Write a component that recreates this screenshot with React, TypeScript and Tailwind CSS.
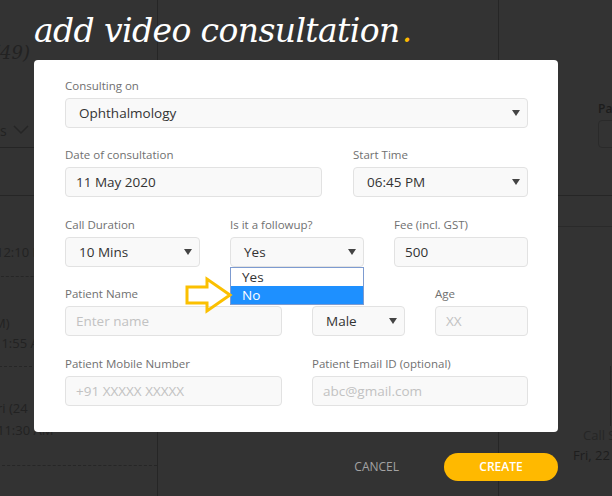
import type { ReactNode } from "react";

const sans = "font-['Open_Sans',_'Noto_Sans',_sans-serif]";

function Caret() {
  return (
    <svg width="8" height="6" viewBox="0 0 8 6" className="shrink-0">
      <path d="M0 0 H8 L4 6 Z" fill="#444" />
    </svg>
  );
}

function Label({ children }: { children: ReactNode }) {
  return (
    <div className="h-4 text-[11.5px] leading-4 text-[#707070] whitespace-nowrap">
      {children}
    </div>
  );
}

function Input({ value, placeholder }: { value?: string; placeholder?: string }) {
  return (
    <div className="mt-1 flex h-[30px] items-center rounded-[4px] border border-[#e2e2e2] bg-[#f9f9f9] px-[10px] text-[13.5px]">
      {value ? (
        <span className="text-[#333]">{value}</span>
      ) : (
        <span className="text-[#c2c2c2]">{placeholder}</span>
      )}
    </div>
  );
}

function Select({ value, children }: { value: string; children?: ReactNode }) {
  return (
    <div className="relative mt-1">
      <div className="flex h-[30px] items-center justify-between rounded-[4px] border border-[#e2e2e2] bg-[#f9f9f9] pl-[13px] pr-[7px] text-[13.5px] text-[#333]">
        <span>{value}</span>
        <Caret />
      </div>
      {children}
    </div>
  );
}

function Field({ label, children }: { label: ReactNode; children: ReactNode }) {
  return (
    <div className="flex flex-col">
      <Label>{label}</Label>
      {children}
    </div>
  );
}

function Background() {
  return (
    <div className={`flex h-full text-[13px] text-[#222] whitespace-nowrap ${sans}`}>
      <div className="flex w-[158px] shrink-0 flex-col border-r border-[#262626]">
        <div className="flex h-[110px] justify-end pt-[39px] pr-[127px] font-['DejaVu_Serif',_serif] text-[18px] italic text-[#222]">
          r (49)
        </div>
        <div className="flex h-[38px] items-end gap-[6px] border-b border-[#252525] pb-[8px] text-[14px]">
          <span className="leading-4">s</span>
          <svg width="16" height="10" viewBox="0 0 16 10" className="mb-[4px]">
            <path d="M1 1 L8 8 L15 1" stroke="#252525" strokeWidth="1.5" fill="none" />
          </svg>
        </div>
        <div className="h-[48px] border-b border-[#262626]" />
        <div className="h-[81px] border-b border-dashed border-[#262626] pt-[47px] -ml-[4px]">12:10 PM</div>
        <div className="h-[90px] border-b border-dashed border-[#262626] pt-[36px] -ml-[6px] leading-5">
          <div>M)</div>
          <div>11:55 AM</div>
        </div>
        <div className="h-[99px] border-b border-dashed border-[#262626] pt-[30px] -ml-[3px] leading-[22px]">
          <div>ri (24</div>
          <div>11:30 AM</div>
        </div>
      </div>
      <div className="w-[341px] shrink-0 border-r border-[#262626]" />
      <div className="flex flex-1 flex-col">
        <div className="h-[100px]" />
        <div className="pl-[99px] text-[12px] font-semibold text-[#1c1c1c]">Pay</div>
        <div className="ml-[99px] mt-[2px] h-[28px] rounded-[4px] border border-[#2a2a2a]" />
        <div className="h-[48px] border-b border-[#262626]" />
        <div className="h-[31px] border-b border-[#2a2a2a]" />
        <div className="ml-[111px] mt-[139px] h-[60px] border-l border-[#262626]" />
        <div className="pl-[84px] text-[13px] text-[#262626]">Call Status</div>
        <div className="pl-[74px] text-[13px] text-[#1e1e1e]">Fri, 22 May</div>
      </div>
    </div>
  );
}

export default function App() {
  return (
    <div className="relative h-[496px] w-[612px] overflow-hidden bg-[#333]">
      <Background />
      <div className={`absolute inset-0 flex flex-col pl-[34px] pr-[54px] ${sans}`}>
        <h1 className="h-[60px] pt-[8px] font-['DejaVu_Serif',_serif] text-[33px] italic leading-[46px] tracking-[-0.6px] text-white whitespace-nowrap">
          add video consultation<span className="ml-[2px] text-[#ffb900]">.</span>
        </h1>
        <div className="relative rounded-[4px] bg-white px-[30px] pb-[26px] pt-[18px] pl-[31px]">
          <Field label="Consulting on">
            <Select value="Ophthalmology" />
          </Field>
          <div className="mt-[19px] grid grid-cols-[257px_1fr] gap-x-[31px]">
            <Field label="Date of consultation">
              <Input value="11 May 2020" />
            </Field>
            <Field label="Start Time">
              <Select value="06:45 PM" />
            </Field>
          </div>
          <div className="mt-[20px] grid grid-cols-[135px_134px_134px] gap-x-[30px]">
            <Field label="Call Duration">
              <Select value="10 Mins" />
            </Field>
            <Field label="Is it a followup?">
              <Select value="Yes">
                <div className="absolute left-0 right-0 top-full z-10 border border-[#7d9bd0] bg-white text-[13.5px] leading-[18px]">
                  <div className="px-[11px] text-[#333]">Yes</div>
                  <div className="bg-[#1e90ff] px-[11px] text-white">No</div>
                </div>
              </Select>
            </Field>
            <Field label="Fee (incl. GST)">
              <Input value="500" />
            </Field>
          </div>
          <div className="mt-[19px] grid grid-cols-[217px_93px_93px] gap-x-[30px]">
            <Field label="Patient Name">
              <Input placeholder="Enter name" />
            </Field>
            <Field label="Gender">
              <Select value="Male" />
            </Field>
            <Field label="Age">
              <Input placeholder="XX" />
            </Field>
          </div>
          <div className="mt-[20px] grid grid-cols-[217px_216px] gap-x-[30px]">
            <Field label="Patient Mobile Number">
              <Input placeholder="+91 XXXXX XXXXX" />
            </Field>
            <Field label="Patient Email ID (optional)">
              <Input placeholder="abc@gmail.com" />
            </Field>
          </div>
          <svg
            width="50"
            height="40"
            viewBox="0 0 50 40"
            className="absolute left-[150px] top-[216px] z-20"
          >
            <path
              d="M3 11 H23 V3 L46 19 L23 35 V27 H3 Z"
              fill="none"
              stroke="#fbc000"
              strokeWidth="3"
              strokeLinejoin="miter"
            />
          </svg>
        </div>
        <div className="mt-[21px] flex items-center justify-end gap-[45px]">
          <span className="text-[12px] text-[#a3a3a3]">CANCEL</span>
          <button className="h-[28px] w-[114px] rounded-full bg-[#ffb900] text-[12px] font-semibold text-white">
            CREATE
          </button>
        </div>
      </div>
    </div>
  );
}
